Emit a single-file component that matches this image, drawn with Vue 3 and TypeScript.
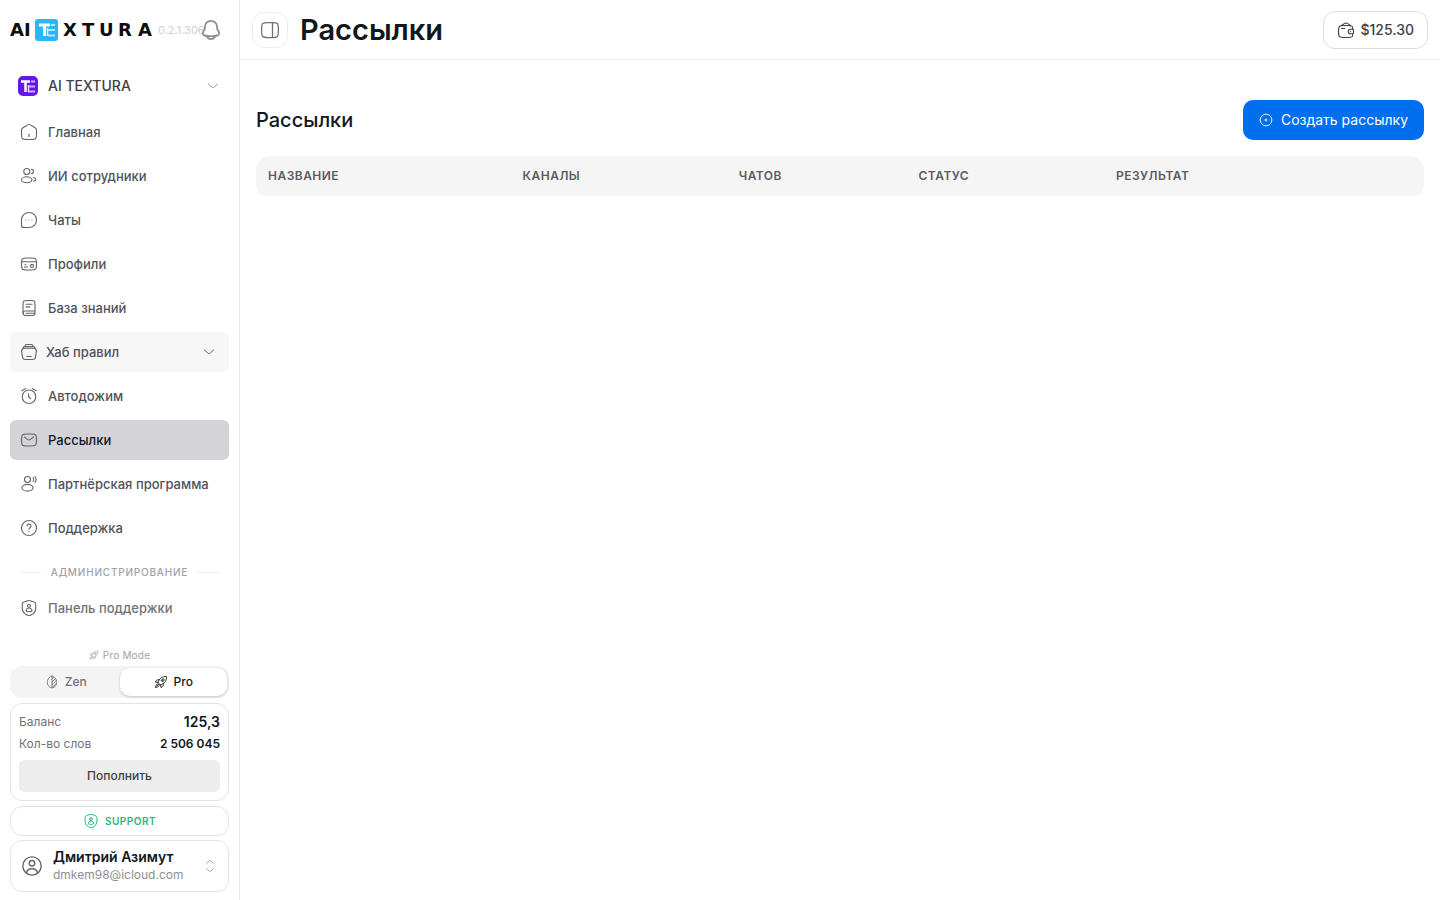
<script setup lang="ts">
import { h, ref } from 'vue'

const circle = (x: number, y: number, r: number) => `M${x - r} ${y}a${r} ${r} 0 1 0 ${2 * r} 0a${r} ${r} 0 1 0 ${-2 * r} 0`
const ellipse = (x: number, y: number, rx: number, ry: number) => `M${x - rx} ${y}a${rx} ${ry} 0 1 0 ${2 * rx} 0a${rx} ${ry} 0 1 0 ${-2 * rx} 0`

const shield = 'M3 10.4c0-3.2 0-4.8.4-5.3.4-.5 1.9-1.1 4.9-2.1l.6-.2C10.4 2.3 11.200 2 12 2s1.600.3 3.100.8l.6.2c3 1 4.500 1.600 4.900 2.100.4.5.4 2.100.4 5.300v1.600c0 5.600-4.200 8.400-6.900 9.500-.7.3-1.100.5-2.100.5s-1.400-.2-2.100-.5C7.200 20.400 3 17.600 3 12z'

const icons: Record<string, string[]> = {
  home: [
    'M2 12.200c0-2.300 0-3.400.5-4.400s1.500-1.500 3.400-2.700l2-1.200C9.900 2.600 10.900 2 12 2s2.100.6 4.100 1.900l2 1.200c1.900 1.200 2.900 1.700 3.400 2.700s.5 2.100.5 4.400v1.500c0 3.900 0 5.900-1.200 7.100S17.800 22 14 22h-4c-3.800 0-5.700 0-6.800-1.200S2 17.600 2 13.700z',
    'M12 15v3',
  ],
  users: [circle(9, 6, 4), 'M15 9a3 3 0 0 0 0-6', ellipse(9, 17, 7, 4), 'M18 14c1.750.380 3 1.360 3 2.500 0 1.030-1.010 1.920-2.500 2.370'],
  chat: ['M12 22c5.500 0 10-4.500 10-10S17.500 2 12 2 2 6.500 2 12v6.500C2 21 2.500 22 5 22z', 'M8 12h.01M12 12h.01M16 12h.01'],
  profile: [
    'M2 12c0-3.800 0-5.700 1.200-6.800S6.200 4 10 4h4c3.800 0 5.700 0 6.800 1.200S22 8.200 22 12s0 5.700-1.200 6.800S17.800 20 14 20h-4c-3.800 0-5.700 0-6.800-1.200S2 15.800 2 12z',
    'M2.500 9h19M6 16h4M6.500 13H8M14 14.500c0-1.700.3-2 2-2s2 .3 2 2-.3 2-2 2-2-.3-2-2z',
  ],
  book: [
    'M4 8c0-2.800 0-4.200.9-5.100S7.200 2 10 2h4c2.800 0 4.200 0 5.100.9S20 5.200 20 8v8c0 2.800 0 4.200-.9 5.100S16.800 22 14 22h-4c-2.800 0-4.200 0-5.100-.9S4 18.800 4 16z',
    'M20 16H7c-1.800 0-3 .8-3 2.500M8 7h8M8 10.500h5M8 19h12',
  ],
  hub: [
    'M19.600 7.400c2 .8 2.400 2.200 2.100 4.600l-.8 5.600c-.6 3.700-1.300 4.400-4.700 4.400H7.800c-3.400 0-4.100-.7-4.700-4.400L2.300 12c-.4-2.700.2-4.100 2.500-4.700.8-.2 1.600-.3 3.200-.3h8c1.600 0 2.700.1 3.600.4z',
    'M4 7c0-1.400.8-2.200 2.200-2.200h11.600C19.200 4.800 20 5.600 20 7M6.500 4.500C6.700 2.900 7.500 2 9 2h6c1.500 0 2.300.9 2.500 2.500M9 18h6',
  ],
  alarm: [circle(12, 13, 9), 'M11.500 9v4l2.500 2.500M3.500 4.500l4-2.500M20.500 4.500l-4-2.500M2.500 5l1-.5M21.500 5l-1-.5'],
  mail: [
    'M2 12c0-3.800 0-5.700 1.200-6.800S6.200 4 10 4h4c3.800 0 5.700 0 6.800 1.200S22 8.200 22 12s0 5.700-1.200 6.800S17.800 20 14 20h-4c-3.800 0-5.700 0-6.800-1.200S2 15.800 2 12z',
    'M6 8l2.200 1.800C10 11.300 10.900 12 12 12s2-.7 3.800-2.200L18 8',
  ],
  partner: [circle(10, 6, 4), ellipse(10, 17, 7.500, 4.500), 'M17.500 3.500c1 1.500 1 3.500 0 5M20 2c1.800 2.500 1.800 5.500 0 8'],
  help: [circle(12, 12, 10), 'M9.600 9.200a2.500 2.500 0 1 1 3.900 2.100c-.9.6-1.500 1.100-1.500 1.900v.5M12 16.500h.01'],
  shield: [shield, circle(12, 9, 2), 'M16 15c0 1.100 0 2-4 2s-4-.9-4-2 1.800-3 4-3 4 1.900 4 3z'],
  user: [circle(12, 12, 10), circle(12, 9, 3), 'M18 19.500c-.3-3-2-4.500-6-4.500s-5.700 1.500-6 4.500'],
  bell: [
    'M18.700 9.700V9c0-3.900-3-7-6.700-7S5.300 5.100 5.300 9v.7c0 .8-.2 1.700-.7 2.400l-1.100 1.700c-1 1.600-.3 3.700 1.500 4.200 4.600 1.200 9.400 1.200 14 0 1.800-.5 2.500-2.600 1.500-4.200l-1.100-1.700c-.5-.7-.7-1.600-.7-2.400z',
    'M7.500 19c.7 1.700 2.400 3 4.500 3s3.800-1.300 4.500-3',
  ],
  down: ['M19 9l-5.200 4.500c-.9.7-1.300 1.100-1.800 1.100s-.9-.4-1.800-1.100L5 9'],
  sort: ['M7 8l3.500-3.300c.7-.6 1-.9 1.500-.9s.8.3 1.500.9L17 8', 'M7 16l3.500 3.300c.7.600 1 .9 1.500.9s.8-.3 1.500-.9L17 16'],
  panel: ['M2 11c0-3.800 0-5.700 1.200-6.800S6.200 3 10 3h4c3.800 0 5.700 0 6.800 1.200S22 7.200 22 11v2c0 3.800 0 5.700-1.200 6.800S17.800 21 14 21h-4c-3.800 0-5.700 0-6.800-1.200S2 16.800 2 13z', 'M15 21V3'],
  wallet: [
    'M20.900 11v-.5c-.1-2-.3-3-1-3.700C18.900 6 17.300 6 14 6h-4C6.200 6 4.300 6 3.200 7.200S2 10.200 2 14s0 5.700 1.200 6.800S6.200 22 10 22h4c3.300 0 4.900 0 5.900-.8.7-.7.9-1.700 1-3.200V17',
    'M20.800 11h-2.600C16.400 11 15 12.300 15 14s1.400 3 3.200 3h2.600c.7 0 1.200-.5 1.200-1.200v-3.600c0-.7-.5-1.200-1.200-1.200zM18 14h.01M6 10h4M6 6l3.700-2.500c1.500-1 3.100-1 4.600 0L18 6',
  ],
  plus: [circle(12, 12, 10), 'M12 10v4M10 12h4'],
  leaf: ['M12 2C8 2 4 7 4 13c0 5 3.600 9 8 9s8-4 8-9c0-6-4-11-8-11z', 'M12 2v20M12 12l5.500-5.500M12 17l7.500-7.500M12 7l3-3M13 21l6-6'],
  rocket: [
    'M9 15l-2.200-2.200c1-3.300 3-6.200 5.700-8C15.200 3 18.200 2.500 21.500 2.500c0 3.300-.5 6.300-2.300 9-1.800 2.700-4.700 4.700-8 5.700z',
    circle(15.500, 8.500, 2),
    'M9.500 8c-2.500-.5-4.500 0-6 2l-1 2 4.300.8M16 14.500c.5 2.500 0 4.500-2 6l-2 1-.8-4.300M6 15c-2 .8-3 3-3.500 6.500C6 21 8.200 20 9 18M5 18.800l3-3M12 9l3 3',
  ],
}

const Icon = (props: { name: string }) =>
  h('svg', { class: ['icon', 'icon-' + props.name], viewBox: '0 0 24 24', 'aria-hidden': 'true' }, icons[props.name].map((d) => h('path', { d })))
Icon.props = ['name']

interface NavItem { label: string; icon: string }
const nav: NavItem[] = [
  { label: 'Главная', icon: 'home' },
  { label: 'ИИ сотрудники', icon: 'users' },
  { label: 'Чаты', icon: 'chat' },
  { label: 'Профили', icon: 'profile' },
  { label: 'База знаний', icon: 'book' },
  { label: 'Хаб правил', icon: 'hub' },
  { label: 'Автодожим', icon: 'alarm' },
  { label: 'Рассылки', icon: 'mail' },
  { label: 'Партнёрская программа', icon: 'partner' },
  { label: 'Поддержка', icon: 'help' },
]
const active = ref('Рассылки')
const mode = ref<'zen' | 'pro'>('pro')
const collapsed = ref(false)
const columns = ['Название', 'Каналы', 'Чатов', 'Статус', 'Результат']
</script>

<template>
  <div class="app">
    <aside v-show="!collapsed" class="sidebar">
      <div class="brand">
        <svg class="logo" viewBox="0 0 144 24" role="img" aria-label="AI TEXTURA">
          <text x="0" y="18">AI</text>
          <rect x="25" y="1" width="23" height="22" rx="3" fill="#2cb5f8" />
          <path d="M29 7h11M34.500 7v11" stroke="#fff" stroke-width="3" />
          <path d="M38 12h7M38 17.500h7" stroke="#b5e5ff" stroke-width="2" />
          <path d="M41 7h4M37.500 10v8" stroke="#e5f6ff" stroke-width="1.500" />
          <text x="53" y="18">X</text>
          <text x="72" y="18">T</text>
          <text x="89" y="18">U</text>
          <text x="108" y="18">R</text>
          <text x="128" y="18">A</text>
        </svg>
        <span class="version">0.2.1.306</span>
        <button class="bell" type="button" aria-label="Уведомления"><Icon name="bell" /></button>
      </div>

      <button class="workspace" type="button">
        <svg class="tile" viewBox="0 0 20 20" aria-hidden="true">
          <rect width="20" height="20" rx="5" fill="#6515ee" />
          <path d="M3 5.500h9M7.500 5.500V16" stroke="#fff" stroke-width="2.500" />
          <path d="M13 5.500h4M11 10.500h6M10 15.500h7" stroke="#cfb0ff" stroke-width="2" />
          <path d="M10.500 9v7" stroke="#eadcff" stroke-width="1.500" />
        </svg>
        <span>AI TEXTURA</span>
        <Icon name="down" />
      </button>

      <nav class="nav">
        <template v-for="item in nav" :key="item.label">
          <button v-if="item.icon === 'hub'" class="nav-item hub" type="button">
            <Icon :name="item.icon" /><span>{{ item.label }}</span><Icon name="down" />
          </button>
          <a v-else class="nav-item" :class="{ active: active === item.label }" href="#" @click.prevent="active = item.label">
            <Icon :name="item.icon" /><span>{{ item.label }}</span>
          </a>
        </template>
        <div class="divider">Администрирование</div>
        <a class="nav-item muted" href="#" @click.prevent><Icon name="shield" /><span>Панель поддержки</span></a>
      </nav>

      <div class="foot">
        <div class="mode-label"><Icon name="rocket" />Pro Mode</div>
        <div class="toggle">
          <button type="button" :class="{ on: mode === 'zen' }" @click="mode = 'zen'"><Icon name="leaf" />Zen</button>
          <button type="button" :class="{ on: mode === 'pro' }" @click="mode = 'pro'"><Icon name="rocket" />Pro</button>
        </div>
        <section class="balance">
          <div class="row"><span>Баланс</span><strong class="amount">125,3</strong></div>
          <div class="row"><span>Кол-во слов</span><strong>2 506 045</strong></div>
          <button class="topup" type="button">Пополнить</button>
        </section>
        <button class="support" type="button"><Icon name="shield" />SUPPORT</button>
        <button class="account" type="button">
          <Icon name="user" />
          <span class="who"><b>Дмитрий Азимут</b><small>dmkem98@icloud.com</small></span>
          <Icon name="sort" />
        </button>
      </div>
    </aside>

    <div class="main">
      <header class="topbar">
        <button class="collapse" type="button" aria-label="Свернуть меню" @click="collapsed = !collapsed"><Icon name="panel" /></button>
        <h1>Рассылки</h1>
        <button class="wallet" type="button"><Icon name="wallet" />$125.30</button>
      </header>
      <main class="content">
        <div class="heading">
          <h2>Рассылки</h2>
          <button class="create" type="button"><Icon name="plus" />Создать рассылку</button>
        </div>
        <table class="table">
          <colgroup><col class="c1" /><col class="c2" /><col class="c3" /><col class="c4" /><col /></colgroup>
          <thead>
            <tr><th v-for="c in columns" :key="c" scope="col">{{ c }}</th></tr>
          </thead>
        </table>
      </main>
    </div>
  </div>
</template>

<style>
body { background: #fff; }
</style>

<style scoped>
* { box-sizing: border-box; }
.app { display: flex; min-height: 100vh; font-family: Inter, "Noto Sans", sans-serif; color: #11181c; font-size: 14px; line-height: 20px; }
button { font: inherit; color: inherit; background: none; border: 0; padding: 0; margin: 0; cursor: pointer; display: flex; align-items: center; text-align: left; }
a { color: inherit; text-decoration: none; }
.icon { width: 18px; height: 18px; flex: none; fill: none; stroke: currentColor; stroke-width: 1.5; stroke-linecap: round; stroke-linejoin: round; }

.sidebar { width: 240px; flex: none; height: 100vh; border-right: 1px solid #ececee; padding: 0 10px 8px; display: flex; flex-direction: column; }
.brand { display: flex; align-items: center; height: 60px; flex: none; }
.logo { width: 144px; height: 24px; flex: none; }
.logo text { font: 700 18px "DejaVu Sans", sans-serif; fill: #0c0d10; }
.version { font-size: 11px; color: #d0d0d4; width: 42px; margin-left: 4px; white-space: nowrap; }
.bell { color: #8e8e93; flex: none; }
.bell .icon { width: 22px; height: 22px; stroke-width: 2; }
.workspace { height: 40px; margin: 6px 0; padding: 0 8px; gap: 10px; font-weight: 500; color: #3f3f46; flex: none; }
.tile { width: 20px; height: 20px; flex: none; }
.workspace .icon-down { width: 16px; height: 16px; margin-left: auto; color: #8e8e96; }
.nav { display: flex; flex-direction: column; gap: 4px; min-height: 0; overflow: hidden; }
.nav-item { display: flex; align-items: center; gap: 10px; height: 40px; flex: none; padding: 0 10px; border-radius: 6px; font-size: 13px; font-weight: 500; color: #52525b; white-space: nowrap; }
.nav-item .icon { color: #63636b; }
.hub { background: #f7f7f8; gap: 8px; }
.hub .icon-down { width: 16px; height: 16px; margin-left: auto; margin-right: 2px; }
.nav-item.active { background: #d4d4d8; }
.nav-item.active span { color: #11181c; }
.nav-item.muted { color: #71717a; }
.divider { display: flex; align-items: center; gap: 9px; height: 16px; margin: 12px 10px 4px; padding: 0; font-size: 10px; font-weight: 500; letter-spacing: 0.08em; line-height: 16px; color: #a1a1aa; text-transform: uppercase; white-space: nowrap; }
.divider::before, .divider::after { content: ""; flex: 1; height: 1px; background: #f1f1f3; }

.foot { margin-top: auto; display: flex; flex-direction: column; flex: none; }
.mode-label { display: flex; align-items: center; justify-content: center; gap: 4px; font-size: 10px; line-height: 16px; letter-spacing: 0.02em; color: #a1a1aa; margin-bottom: 3px; }
.mode-label .icon { width: 10px; height: 10px; }
.toggle { display: flex; height: 32px; padding: 2px; border-radius: 12px; background: #f4f4f5; margin-bottom: 5px; }
.toggle button { flex: 1; justify-content: center; gap: 6px; border-radius: 10px; font-size: 12px; font-weight: 500; color: #71717a; }
.toggle .icon { width: 14px; height: 14px; }
.toggle button.on { background: #fff; color: #11181c; box-shadow: 0 1px 3px rgba(0, 0, 0, 0.2); }
.balance { border: 1px solid #e4e4e7; border-radius: 12px; padding: 8px; margin-bottom: 5px; }
.row { display: flex; justify-content: space-between; align-items: center; height: 20px; margin-bottom: 2px; font-size: 12px; color: #71717a; }
.row strong { font-weight: 600; color: #11181c; }
.row .amount { font-size: 14px; }
.topup { width: 100%; height: 32px; margin-top: 6px; justify-content: center; border-radius: 6px; background: #ededee; font-size: 12px; font-weight: 500; color: #3f3f46; }
.support { justify-content: center; gap: 6px; height: 30px; border: 1px solid #e4e4e7; border-radius: 12px; margin-bottom: 4px; font-size: 10px; font-weight: 600; letter-spacing: 0.05em; color: #1fb877; }
.support .icon { width: 16px; height: 16px; }
.account { height: 52px; padding: 0 10px; gap: 10px; border: 1px solid #e4e4e7; border-radius: 12px; }
.account .icon-user { width: 22px; height: 22px; color: #63636b; }
.account .icon-sort { width: 16px; height: 16px; margin-left: auto; color: #a1a1aa; }
.who { display: flex; flex-direction: column; }
.who b { font-size: 14px; font-weight: 600; line-height: 18px; }
.who small { font-size: 12px; line-height: 18px; color: #8e8e96; }

.main { flex: 1; min-width: 0; }
.topbar { display: flex; align-items: center; gap: 12px; height: 60px; padding: 0 12px; border-bottom: 1px solid #ececee; }
.collapse { width: 36px; height: 36px; justify-content: center; border: 1px solid #ececee; border-radius: 12px; color: #71717a; }
.collapse .icon { width: 20px; height: 20px; }
h1 { margin: 0; font-size: 29px; line-height: 36px; font-weight: 600; }
.wallet { margin-left: auto; height: 38px; gap: 6px; padding: 0 13px; border: 1px solid #dcdcdf; border-radius: 12px; font-weight: 500; color: #3f3f46; }
.content { padding: 40px 16px 16px; }
.heading { display: flex; align-items: center; justify-content: space-between; margin-bottom: 16px; }
h2 { margin: 0; font-size: 20px; line-height: 28px; font-weight: 500; }
.create { height: 40px; padding: 0 16px; gap: 8px; border-radius: 10px; background: #006fee; color: #fff; font-weight: 400; }
.create .icon { width: 14px; height: 14px; }
.table { width: 100%; table-layout: fixed; border-collapse: separate; border-spacing: 0; }
.c1 { width: 21.8%; }
.c2 { width: 18.5%; }
.c3 { width: 15.4%; }
.c4 { width: 16.9%; }
th { height: 40px; padding: 0 12px; background: #f5f5f5; text-align: left; font-size: 12px; font-weight: 600; letter-spacing: 0.04em; text-transform: uppercase; color: #5b5b64; }
th:first-child { border-radius: 14px 0 0 10px; }
th:last-child { border-radius: 0 14px 10px 0; }
</style>
